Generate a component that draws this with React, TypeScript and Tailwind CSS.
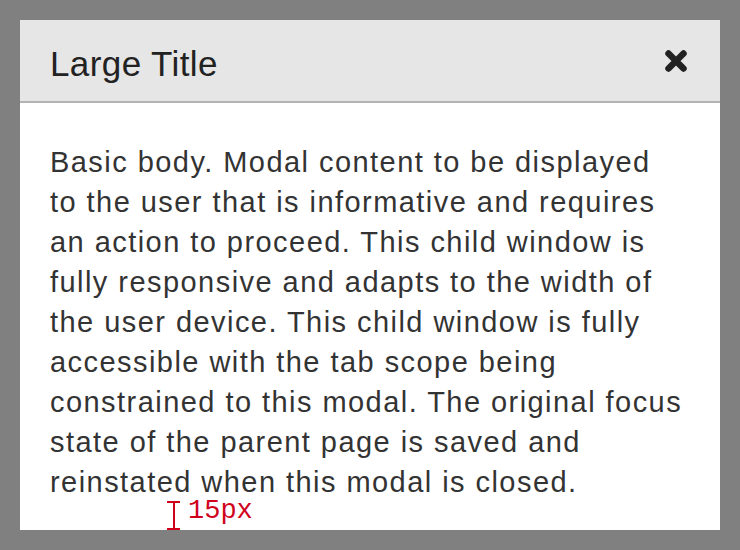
import React from 'react';

const CloseIcon: React.FC = () => (
  <svg width="24" height="24" viewBox="0 0 24 24" aria-hidden="true">
    <path d="M4.5 4.5 L19.5 19.5 M19.5 4.5 L4.5 19.5" stroke="#222222" strokeWidth="6.5" strokeLinecap="round" fill="none" />
  </svg>
);

const lines = [
  'Basic body. Modal content to be displayed',
  'to the user that is informative and requires',
  'an action to proceed. This child window is',
  'fully responsive and adapts to the width of',
  'the user device. This child window is fully',
  'accessible with the tab scope being',
  'constrained to this modal. The original focus',
  'state of the parent page is saved and',
  'reinstated when this modal is closed.',
];

const App: React.FC = () => {
  return (
    <div className="h-[550px] w-[740px] bg-[#808080] p-5 font-['Liberation_Sans',Arial,sans-serif]">
      <div className="flex h-full flex-col bg-white">
        <div className="flex h-[83px] items-center justify-between border-b-2 border-[#b3b3b3] bg-[#e6e6e6] pl-[30px] pr-[32px]">
          <h1 className="pt-[6px] text-[35px] leading-none tracking-[0.4px] text-[#222222]">Large Title</h1>
          <button className="flex items-center" aria-label="Close">
            <CloseIcon />
          </button>
        </div>
        <div className="relative flex-1 px-[30px] pt-[39px]">
          <p className="whitespace-nowrap text-[29px] leading-[40px] tracking-[1.45px] text-[#333333]">
            {lines.map((l, i) => (
              <React.Fragment key={i}>
                {l}
                {i < lines.length - 1 && <br />}
              </React.Fragment>
            ))}
          </p>
          <div className="absolute bottom-0 left-[147px] flex items-start gap-[8px]">
            <div className="flex h-[29px] w-[13px] flex-col items-center justify-between">
              <div className="h-[2px] w-[13px] bg-[#d0021b]" />
              <div className="w-[2px] flex-1 bg-[#d0021b]" />
              <div className="h-[2px] w-[13px] bg-[#d0021b]" />
            </div>
            <span className="-mt-[4px] font-['Liberation_Mono','Courier_New',monospace] text-[27px] leading-[28px] text-[#d0021b]">15px</span>
          </div>
        </div>
      </div>
    </div>
  );
};

export default App;
